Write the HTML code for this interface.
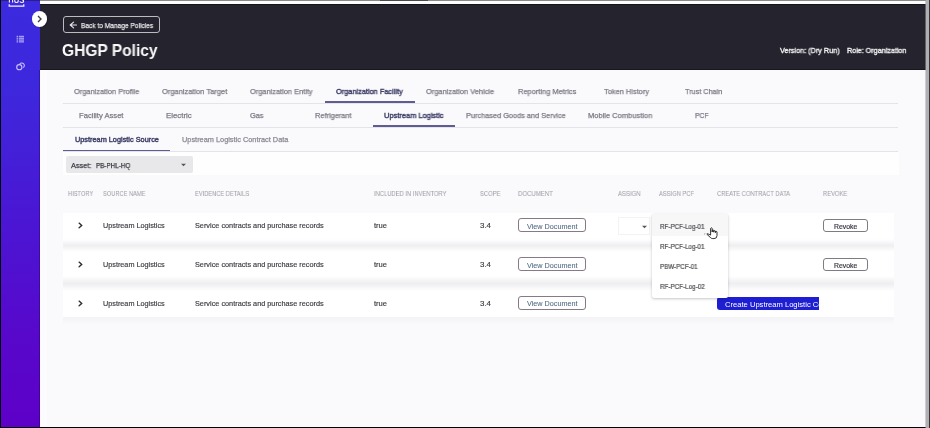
<!DOCTYPE html>
<html><head><meta charset="utf-8">
<style>
*{margin:0;padding:0;box-sizing:border-box}
html,body{width:930px;height:428px;overflow:hidden;background:#fafafd;font-family:"Liberation Sans",sans-serif;position:relative}
.a{position:absolute;white-space:nowrap;transform-origin:0 0}
.g{will-change:transform}
.line{height:1px;background:#e3e3e8}
.ul{height:1.6px;background:#5e5c92}
.row{left:63px;width:831px;background:#fff}
.btn{position:absolute;border:1px solid #857a86;border-radius:3px;background:#fff}
</style></head><body>
<div class="a" style="left:0;top:0;width:40px;height:428px;background:linear-gradient(180deg,#3b2adf 0%,#3e27dc 22%,#4a17d4 50%,#5708cb 78%,#5e00c8 100%)"></div>
<div class="a" style="left:39px;top:70px;width:1px;height:358px;background:rgba(30,0,80,.35)"></div>
<div class="a" style="left:40px;top:70px;width:7px;height:356px;background:#fcfcfe"></div>
<div class="a" style="left:40px;top:4px;width:886px;height:66px;background:#25232d"></div>
<div class="a" style="left:40px;top:69px;width:886px;height:1px;background:#18181c"></div>
<!-- frame -->
<div class="a" style="left:40px;top:0;width:890px;height:1px;background:#8a8a8a"></div>
<div class="a" style="left:40px;top:1px;width:886px;height:3px;background:#fdfdfd"></div>
<div class="a" style="left:40px;top:4px;width:886px;height:1px;background:#151518"></div>
<div class="a" style="left:0;top:0;width:40px;height:1px;background:#2a2080"></div>
<div class="a" style="left:380px;top:0;width:48px;height:1px;background:#4a4a4e"></div>
<div class="a" style="left:0;top:0;width:1px;height:428px;background:#000"></div>
<div class="a" style="left:0;top:426.5px;width:930px;height:1.5px;background:#000"></div>
<div class="a" style="left:925px;top:0;width:4px;height:428px;background:linear-gradient(90deg,rgba(160,160,166,.5) 0 25%,#b0b0b4 25%)"></div>
<div class="a" style="left:929px;top:0;width:1px;height:428px;background:#363636"></div>

<!-- logo -->
<svg class="a" style="left:0;top:0" width="30" height="10" viewBox="0 0 30 10">
<g fill="none" stroke="#f4f2ff" stroke-width="1.1">
<path d="M9.4 -1 V2.6 M12.6 -1 V2.6"/>
<path d="M14.8 -1 V1.2 Q14.8 2.5 16.5 2.5 Q18.2 2.5 18.2 1.2 V-1"/>
<path d="M19.8 1.4 Q20.2 2.5 21.8 2.5 Q23.6 2.5 23.6 1.2 Q23.6 0 22 -0.3"/>
<path d="M9.2 4.3 V6.2 H23.8 V4.3" stroke-width="1.2"/>
</g></svg>
<!-- sidebar icons -->
<svg class="a" style="left:16px;top:35px" width="9" height="8" viewBox="0 0 9 8">
<g fill="#a89ff6"><rect x="0.6" y="0.8" width="1.6" height="1.3"/><rect x="3" y="0.8" width="5" height="1.3"/>
<rect x="0.6" y="2.6" width="1.6" height="1.3"/><rect x="3" y="2.6" width="5" height="1.3"/>
<rect x="0.6" y="4.4" width="1.6" height="1.3"/><rect x="3" y="4.4" width="5" height="1.3"/>
<rect x="0.6" y="6.2" width="1.6" height="1.3"/><rect x="3" y="6.2" width="5" height="1.3"/></g></svg>
<svg class="a" style="left:15px;top:61px" width="11" height="11" viewBox="0 0 11 11">
<g fill="none" stroke="#c8c2fc" stroke-width="1.1"><circle cx="4.3" cy="6.2" r="2.6"/><path d="M4.6 3.4 A2.5 2.5 0 1 1 8.2 6.6"/></g></svg>

<!-- toggle -->
<div class="a" style="left:31.5px;top:11px;width:15.7px;height:15.7px;border-radius:50%;background:#fff;box-shadow:0.5px 0.5px 1.5px rgba(0,0,0,.35)"></div>
<svg class="a" style="left:36px;top:14px" width="8" height="10" viewBox="0 0 8 10">
<path d="M2 2 L5 5 L2 8" fill="none" stroke="#3a3a48" stroke-width="1.3"/></svg>

<!-- back button -->
<div class="a" style="left:63.2px;top:16.3px;width:96.7px;height:16.6px;border:1px solid #bcbcc0;border-radius:3px"></div>
<svg class="a" style="left:69px;top:21px" width="9" height="8" viewBox="0 0 9 8">
<path d="M1.2 4 H7.5 M4.6 1.1 L1.2 4 L4.6 6.9" fill="none" stroke="#e6e6ea" stroke-width="1.15" stroke-linecap="round" stroke-linejoin="round"/></svg>

<!-- tab lines -->
<div class="a line" style="left:63px;top:103px;width:835px"></div>
<div class="a ul" style="left:325px;top:101.3px;width:90px"></div>
<div class="a line" style="left:63px;top:127px;width:835px"></div>
<div class="a ul" style="left:372.5px;top:125.3px;width:82px"></div>
<div class="a line" style="left:63px;top:151px;width:835px"></div>
<div class="a ul" style="left:63px;top:149.8px;width:107px"></div>

<!-- asset select -->
<div class="a" style="left:63px;top:152px;width:836px;height:23px;background:#fefeff"></div>
<div class="a" style="left:66px;top:156px;width:126.6px;height:17px;background:#e8e8eb;border-radius:2px"></div>
<svg class="a" style="left:180px;top:163px" width="7" height="4" viewBox="0 0 7 4"><path d="M1 0.8 H6 L3.5 3.3Z" fill="#55555a"/></svg>

<!-- table rows -->
<div class="a" style="left:63px;top:212.8px;width:831px;height:105px;background:#fff"></div>
<div class="a" style="left:63px;top:238.5px;width:831px;height:13.5px;background:linear-gradient(180deg,rgba(239,239,242,0) 0%,#efeff2 50%,rgba(239,239,242,0) 100%)"></div>
<div class="a" style="left:63px;top:276px;width:831px;height:15px;background:linear-gradient(180deg,rgba(238,238,241,0) 0%,#eeeef1 50%,rgba(238,238,241,0) 100%)"></div>
<div class="a" style="left:63px;top:317px;width:831px;height:8px;background:linear-gradient(180deg,#f3f3f6 0%,rgba(243,243,246,0) 100%)"></div>
<!-- chevrons -->
<svg class="a" style="left:77px;top:221px" width="7" height="8" viewBox="0 0 7 8"><path d="M2.1 2.1 L4.7 4.4 L2.1 6.7" fill="none" stroke="#2c2c32" stroke-width="1.35" stroke-linecap="round"/></svg>
<svg class="a" style="left:77px;top:260px" width="7" height="8" viewBox="0 0 7 8"><path d="M2.1 2.1 L4.7 4.4 L2.1 6.7" fill="none" stroke="#2c2c32" stroke-width="1.35" stroke-linecap="round"/></svg>
<svg class="a" style="left:77px;top:298.6px" width="7" height="8" viewBox="0 0 7 8"><path d="M2.1 2.1 L4.7 4.4 L2.1 6.7" fill="none" stroke="#2c2c32" stroke-width="1.35" stroke-linecap="round"/></svg>

<!-- buttons -->
<div class="btn" style="left:518.1px;top:218.3px;width:67.7px;height:13.8px"></div>
<div class="btn" style="left:518.1px;top:257.3px;width:67.7px;height:13.8px"></div>
<div class="btn" style="left:518.1px;top:296.1px;width:67.7px;height:13.8px"></div>
<div class="btn" style="left:823.1px;top:218.9px;width:44.8px;height:13.5px;border-color:#7c7c84"></div>
<div class="btn" style="left:823.1px;top:257.9px;width:44.8px;height:13.5px;border-color:#7c7c84"></div>

<!-- assign select row1 -->
<div class="a" style="left:618px;top:217px;width:32px;height:18px;background:#fff;border:1px solid #f3f3f5"></div>
<svg class="a" style="left:640.7px;top:224.5px" width="7" height="4" viewBox="0 0 7 4"><path d="M1 0.8 H6 L3.5 3.3Z" fill="#55555a"/></svg>

<div class="a g" style="left:80.90px;top:20.79px;font-size:7.85px;line-height:9.42px;font-weight:400;color:#e6e6ea;transform:scaleX(0.8401);-webkit-text-stroke:0.25px #e6e6ea;">Back to Manage Policies</div>
<div class="a g" style="left:61.79px;top:41.58px;font-size:15.70px;line-height:18.84px;font-weight:700;color:#fafafa;transform:scaleX(0.9905);">GHGP Policy</div>
<div class="a g" style="left:779.93px;top:46.59px;font-size:7.41px;line-height:8.9px;font-weight:400;color:#f0f0f2;transform:scaleX(0.9787);-webkit-text-stroke:0.35px #f0f0f2;">Version: (Dry Run)</div>
<div class="a g" style="left:846.92px;top:46.59px;font-size:7.41px;line-height:8.9px;font-weight:400;color:#f0f0f2;transform:scaleX(0.9680);-webkit-text-stroke:0.35px #f0f0f2;">Role: Organization</div>
<div class="a g" style="left:73.83px;top:86.57px;font-size:7.85px;line-height:9.42px;font-weight:400;color:#7a7a82;transform:scaleX(0.9476);-webkit-text-stroke:0.25px #7a7a82;">Organization Profile</div>
<div class="a g" style="left:162.36px;top:86.57px;font-size:7.85px;line-height:9.42px;font-weight:400;color:#7a7a82;transform:scaleX(0.9544);-webkit-text-stroke:0.25px #7a7a82;">Organization Target</div>
<div class="a g" style="left:250.47px;top:86.57px;font-size:7.85px;line-height:9.42px;font-weight:400;color:#7a7a82;transform:scaleX(0.9444);-webkit-text-stroke:0.25px #7a7a82;">Organization Entity</div>
<div class="a g" style="left:335.89px;top:86.57px;font-size:7.85px;line-height:9.42px;font-weight:400;color:#3e3e68;transform:scaleX(0.9381);-webkit-text-stroke:0.42px #3e3e68;">Organization Facility</div>
<div class="a g" style="left:426.19px;top:86.57px;font-size:7.85px;line-height:9.42px;font-weight:400;color:#7a7a82;transform:scaleX(0.9476);-webkit-text-stroke:0.25px #7a7a82;">Organization Vehicle</div>
<div class="a g" style="left:517.70px;top:86.57px;font-size:7.85px;line-height:9.42px;font-weight:400;color:#7a7a82;transform:scaleX(0.9495);-webkit-text-stroke:0.25px #7a7a82;">Reporting Metrics</div>
<div class="a g" style="left:604.32px;top:86.57px;font-size:7.85px;line-height:9.42px;font-weight:400;color:#7a7a82;transform:scaleX(0.9493);-webkit-text-stroke:0.25px #7a7a82;">Token History</div>
<div class="a g" style="left:684.94px;top:86.57px;font-size:7.85px;line-height:9.42px;font-weight:400;color:#7a7a82;transform:scaleX(0.9232);-webkit-text-stroke:0.25px #7a7a82;">Trust Chain</div>
<div class="a g" style="left:79.31px;top:110.95px;font-size:7.56px;line-height:9.07px;font-weight:400;color:#7a7a82;transform:scaleX(1.0104);-webkit-text-stroke:0.25px #7a7a82;">Facility Asset</div>
<div class="a g" style="left:165.87px;top:110.95px;font-size:7.56px;line-height:9.07px;font-weight:400;color:#7a7a82;transform:scaleX(1.0368);-webkit-text-stroke:0.25px #7a7a82;">Electric</div>
<div class="a g" style="left:249.70px;top:110.95px;font-size:7.56px;line-height:9.07px;font-weight:400;color:#7a7a82;transform:scaleX(0.9739);-webkit-text-stroke:0.25px #7a7a82;">Gas</div>
<div class="a g" style="left:314.78px;top:110.95px;font-size:7.56px;line-height:9.07px;font-weight:400;color:#7a7a82;transform:scaleX(0.9767);-webkit-text-stroke:0.25px #7a7a82;">Refrigerant</div>
<div class="a g" style="left:383.84px;top:110.95px;font-size:7.56px;line-height:9.07px;font-weight:400;color:#3e3e68;transform:scaleX(0.9876);-webkit-text-stroke:0.42px #3e3e68;">Upstream Logistic</div>
<div class="a g" style="left:465.77px;top:110.95px;font-size:7.56px;line-height:9.07px;font-weight:400;color:#7a7a82;transform:scaleX(0.9728);-webkit-text-stroke:0.25px #7a7a82;">Purchased Goods and Service</div>
<div class="a g" style="left:587.77px;top:110.95px;font-size:7.56px;line-height:9.07px;font-weight:400;color:#7a7a82;transform:scaleX(0.9936);-webkit-text-stroke:0.25px #7a7a82;">Mobile Combustion</div>
<div class="a g" style="left:695.39px;top:110.95px;font-size:7.56px;line-height:9.07px;font-weight:400;color:#7a7a82;transform:scaleX(0.8977);-webkit-text-stroke:0.25px #7a7a82;">PCF</div>
<div class="a g" style="left:74.70px;top:135.65px;font-size:7.27px;line-height:8.72px;font-weight:400;color:#3e3e68;transform:scaleX(1.0084);-webkit-text-stroke:0.42px #3e3e68;">Upstream Logistic Source</div>
<div class="a g" style="left:182.00px;top:135.65px;font-size:7.27px;line-height:8.72px;font-weight:400;color:#8a8a92;transform:scaleX(1.0131);-webkit-text-stroke:0.25px #8a8a92;">Upstream Logistic Contract Data</div>
<div class="a g" style="left:71.00px;top:160.55px;font-size:7.56px;line-height:9.07px;font-weight:400;color:#3a3a40;transform:scaleX(0.9753);-webkit-text-stroke:0.25px #3a3a40;">Asset:</div>
<div class="a g" style="left:95.80px;top:160.55px;font-size:7.56px;line-height:9.07px;font-weight:400;color:#3a3a40;transform:scaleX(0.8359);-webkit-text-stroke:0.25px #3a3a40;">PB-PHL-HQ</div>
<div class="a g" style="left:67.79px;top:189.82px;font-size:7.12px;line-height:8.55px;font-weight:400;color:#a0a0a8;transform:scaleX(0.8084);-webkit-text-stroke:0.05px #a0a0a8;">HISTORY</div>
<div class="a g" style="left:102.69px;top:189.82px;font-size:7.12px;line-height:8.55px;font-weight:400;color:#a0a0a8;transform:scaleX(0.8004);-webkit-text-stroke:0.05px #a0a0a8;">SOURCE NAME</div>
<div class="a g" style="left:194.80px;top:189.82px;font-size:7.12px;line-height:8.55px;font-weight:400;color:#a0a0a8;transform:scaleX(0.8024);-webkit-text-stroke:0.05px #a0a0a8;">EVIDENCE DETAILS</div>
<div class="a g" style="left:374.40px;top:189.82px;font-size:7.12px;line-height:8.55px;font-weight:400;color:#a0a0a8;transform:scaleX(0.8170);-webkit-text-stroke:0.05px #a0a0a8;">INCLUDED IN INVENTORY</div>
<div class="a g" style="left:479.86px;top:189.82px;font-size:7.12px;line-height:8.55px;font-weight:400;color:#a0a0a8;transform:scaleX(0.8194);-webkit-text-stroke:0.05px #a0a0a8;">SCOPE</div>
<div class="a g" style="left:518.02px;top:189.82px;font-size:7.12px;line-height:8.55px;font-weight:400;color:#a0a0a8;transform:scaleX(0.8506);-webkit-text-stroke:0.05px #a0a0a8;">DOCUMENT</div>
<div class="a g" style="left:618.32px;top:189.82px;font-size:7.12px;line-height:8.55px;font-weight:400;color:#a0a0a8;transform:scaleX(0.8391);-webkit-text-stroke:0.05px #a0a0a8;">ASSIGN</div>
<div class="a g" style="left:658.51px;top:189.82px;font-size:7.12px;line-height:8.55px;font-weight:400;color:#a0a0a8;transform:scaleX(0.8145);-webkit-text-stroke:0.05px #a0a0a8;">ASSIGN PCF</div>
<div class="a g" style="left:716.66px;top:189.82px;font-size:7.12px;line-height:8.55px;font-weight:400;color:#a0a0a8;transform:scaleX(0.8157);-webkit-text-stroke:0.05px #a0a0a8;">CREATE CONTRACT DATA</div>
<div class="a g" style="left:823.06px;top:189.82px;font-size:7.12px;line-height:8.55px;font-weight:400;color:#a0a0a8;transform:scaleX(0.8143);-webkit-text-stroke:0.05px #a0a0a8;">REVOKE</div>
<div class="a g" style="left:102.54px;top:222.00px;font-size:6.83px;line-height:8.2px;font-weight:400;color:#3c3c42;transform:scaleX(1.0616);-webkit-text-stroke:0.15px #3c3c42;">Upstream Logistics</div>
<div class="a g" style="left:194.93px;top:222.00px;font-size:6.83px;line-height:8.2px;font-weight:400;color:#3c3c42;transform:scaleX(1.0700);-webkit-text-stroke:0.15px #3c3c42;">Service contracts and purchase records</div>
<div class="a g" style="left:373.89px;top:222.00px;font-size:6.83px;line-height:8.2px;font-weight:400;color:#3c3c42;transform:scaleX(1.1086);-webkit-text-stroke:0.15px #3c3c42;">true</div>
<div class="a g" style="left:480.19px;top:222.00px;font-size:6.83px;line-height:8.2px;font-weight:400;color:#3c3c42;transform:scaleX(1.1576);-webkit-text-stroke:0.15px #3c3c42;">3.4</div>
<div class="a g" style="left:526.68px;top:222.94px;font-size:6.83px;line-height:8.2px;font-weight:400;color:#4e6884;transform:scaleX(1.0586);-webkit-text-stroke:0.05px #4e6884;">View Document</div>
<div class="a g" style="left:834.00px;top:223.17px;font-size:6.69px;line-height:8.02px;font-weight:400;color:#3c3c48;transform:scaleX(1.0233);-webkit-text-stroke:0.2px #3c3c48;">Revoke</div>
<div class="a g" style="left:102.54px;top:261.00px;font-size:6.83px;line-height:8.2px;font-weight:400;color:#3c3c42;transform:scaleX(1.0616);-webkit-text-stroke:0.15px #3c3c42;">Upstream Logistics</div>
<div class="a g" style="left:194.93px;top:261.00px;font-size:6.83px;line-height:8.2px;font-weight:400;color:#3c3c42;transform:scaleX(1.0700);-webkit-text-stroke:0.15px #3c3c42;">Service contracts and purchase records</div>
<div class="a g" style="left:373.89px;top:261.00px;font-size:6.83px;line-height:8.2px;font-weight:400;color:#3c3c42;transform:scaleX(1.1086);-webkit-text-stroke:0.15px #3c3c42;">true</div>
<div class="a g" style="left:480.19px;top:261.00px;font-size:6.83px;line-height:8.2px;font-weight:400;color:#3c3c42;transform:scaleX(1.1576);-webkit-text-stroke:0.15px #3c3c42;">3.4</div>
<div class="a g" style="left:526.68px;top:261.94px;font-size:6.83px;line-height:8.2px;font-weight:400;color:#4e6884;transform:scaleX(1.0586);-webkit-text-stroke:0.05px #4e6884;">View Document</div>
<div class="a g" style="left:834.00px;top:262.17px;font-size:6.69px;line-height:8.02px;font-weight:400;color:#3c3c48;transform:scaleX(1.0233);-webkit-text-stroke:0.2px #3c3c48;">Revoke</div>
<div class="a g" style="left:102.54px;top:299.70px;font-size:6.83px;line-height:8.2px;font-weight:400;color:#3c3c42;transform:scaleX(1.0616);-webkit-text-stroke:0.15px #3c3c42;">Upstream Logistics</div>
<div class="a g" style="left:194.93px;top:299.70px;font-size:6.83px;line-height:8.2px;font-weight:400;color:#3c3c42;transform:scaleX(1.0700);-webkit-text-stroke:0.15px #3c3c42;">Service contracts and purchase records</div>
<div class="a g" style="left:373.89px;top:299.70px;font-size:6.83px;line-height:8.2px;font-weight:400;color:#3c3c42;transform:scaleX(1.1086);-webkit-text-stroke:0.15px #3c3c42;">true</div>
<div class="a g" style="left:480.19px;top:299.70px;font-size:6.83px;line-height:8.2px;font-weight:400;color:#3c3c42;transform:scaleX(1.1576);-webkit-text-stroke:0.15px #3c3c42;">3.4</div>
<div class="a g" style="left:526.68px;top:299.63px;font-size:6.83px;line-height:8.2px;font-weight:400;color:#4e6884;transform:scaleX(1.0586);-webkit-text-stroke:0.05px #4e6884;">View Document</div>

<!-- create button -->
<div class="a" style="left:717px;top:297.3px;width:101.8px;height:12.4px;background:#1e1ed2;border-radius:3px 0 0 3px;overflow:hidden">
<div class="a g" style="left:8px;top:2.5px;font-size:7.6px;line-height:10px;color:#fff;font-family:'Liberation Sans',sans-serif">Create Upstream Logistic Contract Data</div>
</div>

<!-- menu -->
<div class="a" style="left:651.8px;top:213.9px;width:76.4px;height:84px;background:#fff;border-radius:2px;box-shadow:0 1px 3px rgba(0,0,0,.22),0 0 1px rgba(0,0,0,.15);overflow:hidden">
<div class="a" style="left:0;top:0;width:77px;height:22px;background:#f7f7f8"></div>
</div>
<div class="a g" style="left:660.15px;top:223.01px;font-size:6.40px;line-height:7.67px;font-weight:400;color:#4a4a4e;transform:scaleX(0.9791);-webkit-text-stroke:0.2px #4a4a4e;">RF-PCF-Log-01</div>
<div class="a g" style="left:660.15px;top:243.01px;font-size:6.40px;line-height:7.67px;font-weight:400;color:#4a4a4e;transform:scaleX(0.9791);-webkit-text-stroke:0.2px #4a4a4e;">RF-PCF-Log-01</div>
<div class="a g" style="left:660.15px;top:262.57px;font-size:6.69px;line-height:8.02px;font-weight:400;color:#4a4a4e;transform:scaleX(0.9314);-webkit-text-stroke:0.2px #4a4a4e;">PBW-PCF-01</div>
<div class="a g" style="left:660.02px;top:282.70px;font-size:6.98px;line-height:8.37px;font-weight:400;color:#4a4a4e;transform:scaleX(0.9029);-webkit-text-stroke:0.2px #4a4a4e;">RF-PCF-Log-02</div>

<!-- cursor -->
<svg class="a" style="left:700px;top:224px" width="20" height="18" viewBox="0 0 20 18">
<path d="M10.6 11 V4.4 Q11.4 3.2 12.2 4.4 V8 V6.4 Q13 5.5 13.8 6.4 V8.2 V7 Q14.6 6.1 15.4 7 V8.6 V7.8 Q16.2 6.9 17 7.8 V11.6 Q17 14.6 14 14.6 H12.8 Q11.2 14.6 10.2 13.3 L7.2 10.6 Q6.7 9.8 7.7 9.7 L10.6 11.2" fill="#fff" stroke="#1c1c20" stroke-width="0.9" stroke-linejoin="round"/>
<rect x="4.3" y="9.6" width="0.7" height="0.8" fill="#555"/><rect x="5.8" y="9.3" width="0.6" height="0.7" fill="#777"/>
</svg>
</body></html>
